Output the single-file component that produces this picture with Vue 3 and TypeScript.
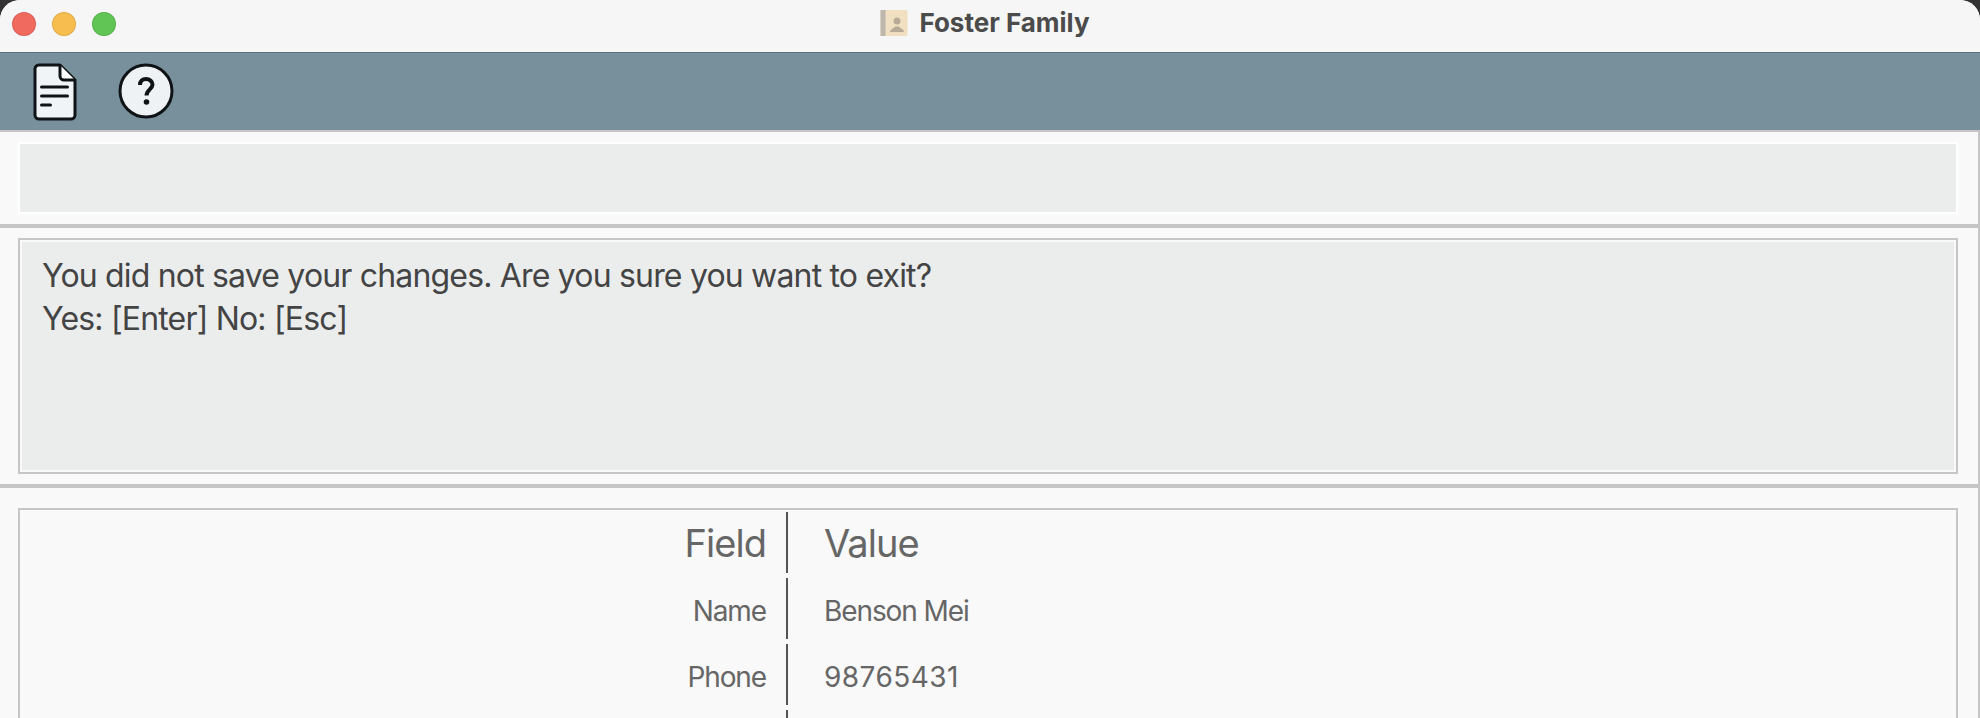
<script setup lang="ts">
interface Row { field: string; value: string; numeric?: boolean }
const rows: Row[] = [
  { field: 'Name', value: 'Benson Mei' },
  { field: 'Phone', value: '98765431', numeric: true },
  { field: '', value: '' }
]
</script>

<template>
  <div class="window">
    <header class="titlebar">
      <div class="lights">
        <span class="light red"></span>
        <span class="light yellow"></span>
        <span class="light green"></span>
      </div>
      <div class="title">
        <svg class="book" width="28" height="28" viewBox="0 0 28 28">
          <rect x="0.5" y="1" width="27" height="26" rx="1.5" fill="#f0dfc0" />
          <rect x="0.5" y="1" width="5" height="26" fill="#bdb7ad" />
          <circle cx="17" cy="12" r="3.500" fill="#b7ab98" />
          <path d="M10 23c0-3 4-3.500 5-5.500h4c1 2 5 2.500 5 5.500z" fill="#b7ab98" />
        </svg>
        <span>Foster Family</span>
      </div>
    </header>

    <nav class="toolbar">
      <svg class="tool" width="44" height="58" viewBox="0 0 44 58" fill="none">
        <path d="M6 2h21l15 15v35a4 4 0 0 1-4 4H6a4 4 0 0 1-4-4V6a4 4 0 0 1 4-4z" fill="#f0f4f6" stroke="#0f1316" stroke-width="3" stroke-linejoin="round" />
        <path d="M27 2v11a4 4 0 0 0 4 4h11" stroke="#0f1316" stroke-width="3" fill="#fff" />
        <path d="M8.500 24h26M8.500 33h26M8.500 42h9" stroke="#0f1316" stroke-width="3" stroke-linecap="round" />
      </svg>
      <svg class="tool help" width="56" height="56" viewBox="0 0 56 56" fill="none">
        <circle cx="28" cy="28" r="26" fill="#eef2f4" stroke="#0f1316" stroke-width="3" />
        <path d="M22 22c0-4 2.500-6 6-6s6.500 2.500 6.500 5.500c0 4.500-6 5.500-6 11" stroke="#0f1316" stroke-width="4" />
        <circle cx="28.500" cy="39" r="2.800" fill="#0f1316" />
      </svg>
    </nav>

    <main class="content">
      <section class="pane command-pane">
        <div class="command-box"></div>
      </section>
      <div class="divider"></div>
      <section class="pane message-pane">
        <div class="message-box">
          <p>You did not save your changes. Are you sure you want to exit?</p>
          <p>Yes: [Enter] No: [Esc]</p>
        </div>
      </section>
      <div class="divider"></div>
      <section class="pane table-pane">
        <div class="table">
          <div class="row head">
            <div class="cell field">Field</div>
            <div class="cell value">Value</div>
          </div>
          <div v-for="(row, i) in rows" :key="i" class="row body-row">
            <div class="cell field">{{ row.field }}</div>
            <div class="cell value" :class="{ numeric: row.numeric }">{{ row.value }}</div>
          </div>
        </div>
      </section>
    </main>
  </div>
</template>

<style>
html, body { margin: 0; background: #333; }
</style>

<style scoped>
.window {
  width: 1980px;
  height: 718px;
  overflow: hidden;
  display: flex;
  flex-direction: column;
  font-family: Inter, "Liberation Sans", sans-serif;
  background: #f9f9f9;
  border-radius: 20px 20px 0 0;
}
.titlebar {
  height: 52px;
  flex: none;
  box-sizing: border-box;
  padding-right: 10px;
  display: flex;
  align-items: center;
  justify-content: center;
  position: relative;
  background: #f6f6f6;
}
.lights {
  position: absolute;
  left: 12px;
  top: 12px;
  display: flex;
  gap: 16px;
}
.light {
  width: 24px;
  height: 24px;
  border-radius: 50%;
  box-sizing: border-box;
  border: 1px solid rgba(0, 0, 0, 0.1);
}
.red { background: #f16a60; }
.yellow { background: #f7be4f; }
.green { background: #60c554; }
.title {
  display: flex;
  align-items: center;
  gap: 11px;
  font-size: 26px;
  font-weight: 700;
  color: #4b4b4b;
  margin-top: -7px;
}
.toolbar {
  height: 78px;
  flex: none;
  box-sizing: border-box;
  display: flex;
  align-items: center;
  padding-left: 33px;
  gap: 41px;
  background: #78909c;
  border-top: 1px solid #56707e;
}
.help { margin-top: -1px; }
.content {
  flex: 1;
  min-height: 0;
  display: flex;
  flex-direction: column;
  border-top: 2px solid #c6c6c6;
  border-right: 2px solid #c6c6c6;
}
.pane {
  padding: 10px 20px 10px 18px;
}
.divider {
  height: 4px;
  flex: none;
  background: #c6c6c6;
}
.command-box {
  height: 68px;
  background: #ebeded;
  border: 2px solid #fff;
}
.message-box {
  height: 236px;
  box-sizing: border-box;
  padding: 14px 22px;
  background: #ebeded;
  border: 2px solid #c6c6c6;
  outline: 2px solid #fafafa;
  outline-offset: -4px;
  font-size: 32px;
  letter-spacing: -0.82px;
  line-height: 43px;
  color: #444;
}
.message-box p { margin: 0; }
.table-pane {
  flex: 1;
  min-height: 0;
  padding: 20px 20px 0 18px;
}
.table {
  height: 100%;
  box-sizing: border-box;
  border: 2px solid #c6c6c6;
  border-bottom: none;
  padding-top: 2px;
  color: #666;
}
.row {
  height: 66px;
  display: grid;
  grid-template-columns: 768px 1fr;
  font-size: 28px;
  letter-spacing: -1.1px;
}
.cell {
  display: flex;
  align-items: center;
  height: 61px;
  box-sizing: border-box;
}
.body-row .cell { padding-top: 4px; }
.field {
  justify-content: flex-end;
  padding-right: 20px;
  border-right: 2px solid #555;
}
.value {
  padding-left: 36px;
}
.numeric { letter-spacing: 0.45px; }
.head { font-size: 38px; letter-spacing: -0.95px; }
</style>
